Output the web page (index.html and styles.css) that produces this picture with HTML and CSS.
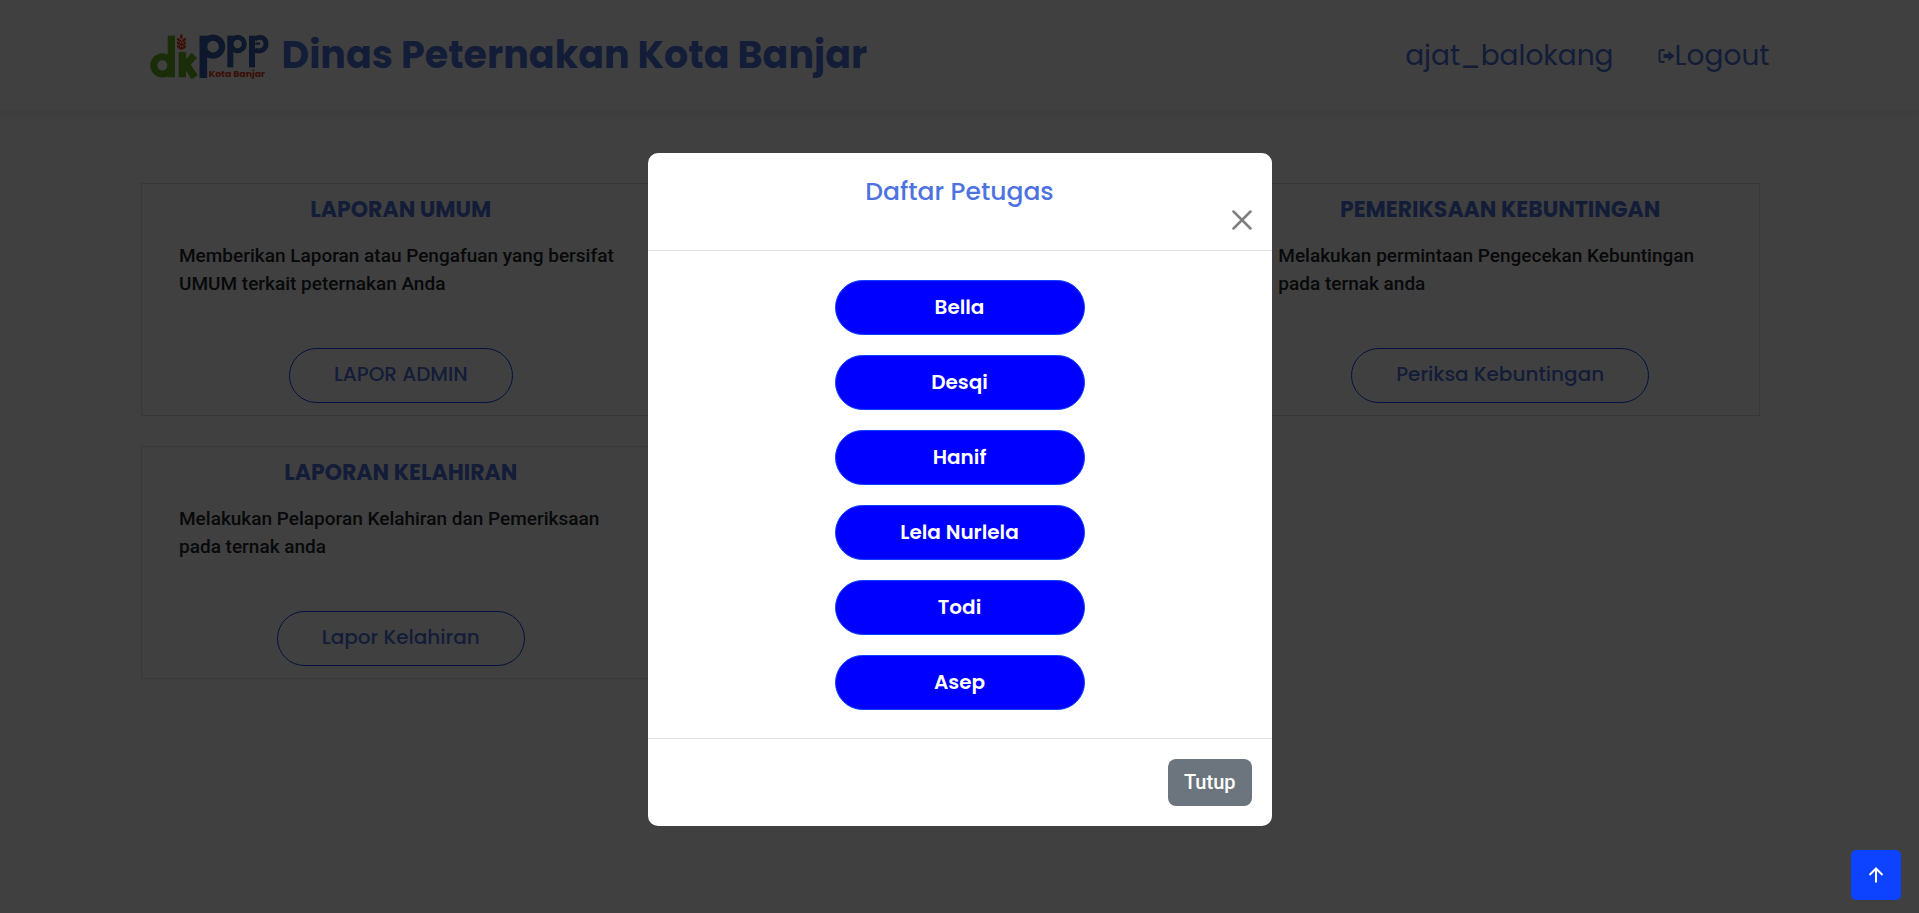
FILE: index.html
```html
<!DOCTYPE html>
<html lang="id">
<head>
<meta charset="utf-8">
<meta name="viewport" content="width=device-width, initial-scale=1">
<title>Dinas Peternakan Kota Banjar</title>
<link rel="stylesheet" href="styles.css">
</head>
<body>
<header class="header">
  <div class="header-inner">
    <a class="brand" href="#">
      <svg class="brand-logo" viewBox="30 28 357 135" role="img" aria-label="dkppp Kota Banjar">
        <g fill="none" stroke="#6ab023">
          <circle cx="67" cy="122" r="26" stroke-width="21"/>
          <path d="M94 33v125" stroke-width="22"/>
          <path d="M127 82v76" stroke-width="22"/>
          <path d="M134 124l29-32M138 118l26 40" stroke-width="22"/>
        </g>
        <g fill="none" stroke="#3a62ae">
          <path d="M190 33v127" stroke-width="23"/>
          <circle cx="219" cy="66" r="27" stroke-width="19"/>
          <path d="M271 33v95" stroke-width="18"/>
          <circle cx="293" cy="58" r="20" stroke-width="15"/>
          <path d="M336 33v95" stroke-width="18"/>
          <path d="M343 46c4-10 34-14 35 10 0 24-22 26-34 20" stroke-width="15"/>
          <path d="M346 57h14" stroke-width="7"/>
        </g>
        <g fill="#e8401c">
          <path d="M123 50h3v27h-3z"/>
          <ellipse cx="124" cy="36" rx="4" ry="7"/>
          <ellipse cx="117" cy="46" rx="4" ry="8" transform="rotate(-50 117 46)"/>
          <ellipse cx="132" cy="46" rx="4" ry="8" transform="rotate(50 132 46)"/>
          <ellipse cx="117" cy="57" rx="4" ry="8" transform="rotate(-50 117 57)"/>
          <ellipse cx="132" cy="57" rx="4" ry="8" transform="rotate(50 132 57)"/>
          <ellipse cx="117" cy="68" rx="4" ry="8" transform="rotate(-50 117 68)"/>
          <ellipse cx="132" cy="68" rx="4" ry="8" transform="rotate(50 132 68)"/>
        </g>
        <text class="brand-sub" x="206" y="158">Kota Banjar</text>
      </svg>
      <span class="brand-name">Dinas Peternakan Kota Banjar</span>
    </a>
    <nav class="nav">
      <a class="nav-link" href="#">ajat_balokang</a>
      <a class="nav-link" href="#"><svg class="logout-icon" viewBox="0 0 16 14" aria-hidden="true"><path d="M6 1H3a2 2 0 0 0-2 2v8a2 2 0 0 0 2 2h3" fill="none" stroke="currentColor" stroke-width="2"/><path d="M5 5h5V2l6 5-6 5V9H5z" fill="currentColor"/></svg>Logout</a>
    </nav>
  </div>
</header>

<main class="services">
  <article class="card">
    <h2 class="card-title">LAPORAN UMUM</h2>
    <p class="card-text">Memberikan Laporan atau Pengafuan yang bersifat UMUM terkait peternakan Anda</p>
    <button class="btn-outline" type="button">LAPOR ADMIN</button>
  </article>
  <article class="card"></article>
  <article class="card">
    <h2 class="card-title">PEMERIKSAAN KEBUNTINGAN</h2>
    <p class="card-text">Melakukan permintaan Pengecekan Kebuntingan pada ternak anda</p>
    <button class="btn-outline" type="button">Periksa Kebuntingan</button>
  </article>
  <article class="card">
    <h2 class="card-title">LAPORAN KELAHIRAN</h2>
    <p class="card-text">Melakukan Pelaporan Kelahiran dan Pemeriksaan pada ternak anda</p>
    <button class="btn-outline" type="button">Lapor Kelahiran</button>
  </article>
</main>

<div class="backdrop">
  <section class="modal" role="dialog" aria-modal="true" aria-labelledby="modal-title">
    <div class="modal-header">
      <h1 class="modal-title" id="modal-title">Daftar Petugas</h1>
      <button class="close" type="button" aria-label="Close"><svg viewBox="0 0 20 20" aria-hidden="true"><path d="M1.500 1.500l17 17m0-17l-17 17" fill="none" stroke="currentColor" stroke-width="2.500" stroke-linecap="round"/></svg></button>
    </div>
    <div class="modal-body">
      <button class="btn-person" type="button">Bella</button>
      <button class="btn-person" type="button">Desqi</button>
      <button class="btn-person" type="button">Hanif</button>
      <button class="btn-person" type="button">Lela Nurlela</button>
      <button class="btn-person" type="button">Todi</button>
      <button class="btn-person" type="button">Asep</button>
    </div>
    <div class="modal-footer">
      <button class="btn-close" type="button">Tutup</button>
    </div>
  </section>
</div>

<a class="to-top" href="#" aria-label="Back to top"><svg viewBox="0 0 16 16" aria-hidden="true"><path d="M8 15.500V1.500M1.500 8L8 1.500L14.500 8" fill="none" stroke="currentColor" stroke-width="2"/></svg></a>
</body>
</html>
```

FILE: styles.css
```css
* {
  box-sizing: border-box;
}

body {
  margin: 0;
  min-height: 100vh;
  background: #fff;
  color: #212529;
  font-family: Roboto, "Liberation Sans", sans-serif;
  font-size: 19px;
  line-height: 28px;
}

a {
  color: inherit;
  text-decoration: none;
}

button {
  cursor: pointer;
}

.header {
  color: #4e73df;
  font-family: Poppins, Inter, sans-serif;
  box-shadow: 0 2px 15px rgba(0, 0, 0, 0.1);
}

.header-inner {
  display: flex;
  align-items: center;
  justify-content: space-between;
  width: 85%;
  max-width: 1620px;
  min-height: 110px;
  margin: 0 auto;
}

.brand {
  display: flex;
  align-items: center;
  gap: 13px;
}

.brand-logo {
  width: 119px;
  height: 45px;
  margin-top: 3px;
}

.brand-sub {
  fill: #e8401c;
  font-size: 28px;
  font-weight: 700;
}

.brand-name {
  font-size: 38px;
  font-weight: 700;
  line-height: 48px;
}

.nav {
  display: flex;
  gap: 44px;
  padding-top: 2px;
}

.nav-link {
  display: flex;
  align-items: center;
  font-size: 28px;
  line-height: 40px;
}

.logout-icon {
  width: 17px;
  height: 14px;
}

.services {
  display: grid;
  grid-template-columns: repeat(3, 1fr);
  gap: 30px;
  width: 86%;
  max-width: 1637px;
  margin: 0 auto;
  padding: 73px 18px 0 0;
}

.card {
  display: flex;
  flex-direction: column;
  align-items: center;
  min-height: 233px;
  padding: 12px 37px;
  border: 1px solid #ddd;
}

.card-title {
  margin: 0 0 18px;
  color: #4e73df;
  font: 700 22px/28px Poppins, Inter, sans-serif;
}

.card-text {
  align-self: stretch;
  margin: 0 0 auto;
  font-weight: 500;
}

.btn-outline {
  padding: 0 44px 2px;
  border: 1px solid #0d42ff;
  border-radius: 50px;
  background: transparent;
  color: #4e73df;
  font: 500 20px/51px Poppins, Inter, sans-serif;
}

.backdrop {
  position: fixed;
  inset: 0;
  display: flex;
  align-items: flex-start;
  justify-content: center;
  padding-top: 153px;
  background: rgba(0, 0, 0, 0.75);
}

.modal {
  width: 624px;
  max-width: 95%;
  border-radius: 10px;
  background: #fff;
}

.modal-header {
  display: flex;
  flex-direction: column;
  padding: 20px;
  border-bottom: 1px solid #dee2e6;
}

.modal-title {
  margin: 0;
  color: #4e73df;
  font: 500 25px/37px Poppins, Inter, sans-serif;
  text-align: center;
}

.close {
  align-self: flex-end;
  width: 20px;
  height: 20px;
  padding: 0;
  border: 0;
  background: none;
  color: #7f7f7f;
}

.close svg {
  display: block;
}

.modal-body {
  display: flex;
  flex-direction: column;
  align-items: center;
  gap: 20px;
  padding: 29px 20px 28px;
}

.btn-person {
  width: 250px;
  padding: 0;
  border: 1px solid #0d42ff;
  border-radius: 50px;
  background: #00f;
  color: #fff;
  font: 600 20px/53px Poppins, Inter, sans-serif;
}

.modal-footer {
  display: flex;
  justify-content: flex-end;
  padding: 20px;
  border-top: 1px solid #dee2e6;
}

.btn-close {
  padding: 0 16px;
  border: 0;
  border-radius: 8px;
  background: #6c757d;
  color: #fff;
  font: 500 20px/47px Roboto, sans-serif;
}

.to-top {
  position: fixed;
  right: 18px;
  bottom: 13px;
  display: flex;
  align-items: center;
  justify-content: center;
  width: 50px;
  height: 50px;
  border-radius: 5px;
  background: #0d42ff;
  color: #fff;
}

.to-top svg {
  width: 16px;
  height: 16px;
}
```
